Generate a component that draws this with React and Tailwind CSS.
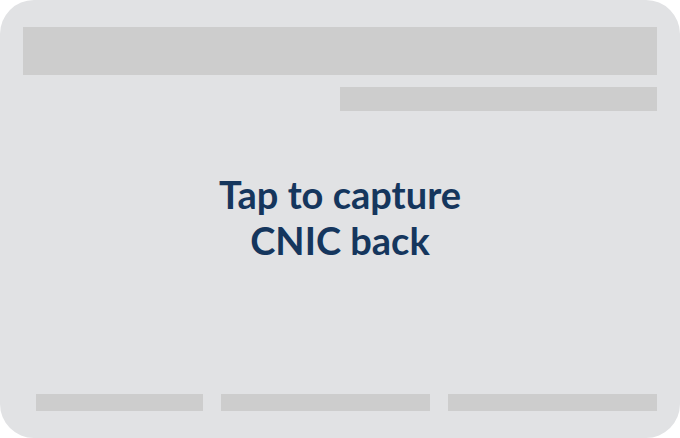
import React from "react";

const App = () => {
  return (
    <div className="w-[680px] h-[438px] bg-white">
      <div className="w-full h-full rounded-[34px] bg-[#e1e2e4] flex flex-col pt-[27px] pb-[27px] pl-[23px] pr-[23px]">
        <div className="h-[48px] w-full bg-[#cdcdcd]" />
        <div className="mt-[12px] h-[24px] w-[317px] self-end bg-[#cdcdcd]" />

        <div className="flex-1 flex items-center justify-center">
          <p
            className="text-[38px] leading-[46px] font-bold text-[#15365d] text-center mb-[72px]"
            style={{ fontFamily: "Lato, 'Noto Sans', sans-serif" }}
          >
            Tap to capture
            <br />
            CNIC back
          </p>
        </div>

        <div className="flex gap-[18px] pl-[13px]">
          <div className="h-[17px] w-[167px] bg-[#cdcdcd]" />
          <div className="h-[17px] w-[209px] bg-[#cdcdcd]" />
          <div className="h-[17px] w-[209px] bg-[#cdcdcd]" />
        </div>
      </div>
    </div>
  );
};

export default App;
